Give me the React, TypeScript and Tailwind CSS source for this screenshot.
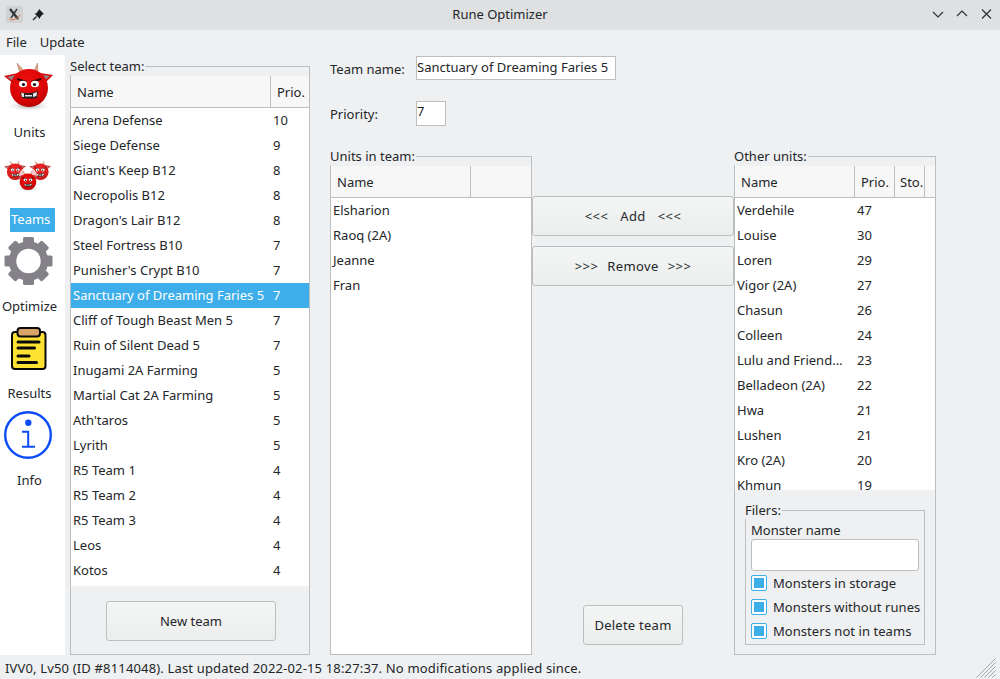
import type { ReactNode } from 'react'

const teams = [
  ['Arena Defense', '10'],
  ['Siege Defense', '9'],
  ["Giant's Keep B12", '8'],
  ['Necropolis B12', '8'],
  ["Dragon's Lair B12", '8'],
  ['Steel Fortress B10', '7'],
  ["Punisher's Crypt B10", '7'],
  ['Sanctuary of Dreaming Faries 5', '7'],
  ['Cliff of Tough Beast Men 5', '7'],
  ['Ruin of Silent Dead 5', '7'],
  ['Inugami 2A Farming', '5'],
  ['Martial Cat 2A Farming', '5'],
  ["Ath'taros", '5'],
  ['Lyrith', '5'],
  ['R5 Team 1', '4'],
  ['R5 Team 2', '4'],
  ['R5 Team 3', '4'],
  ['Leos', '4'],
  ['Kotos', '4'],
]

const teamUnits = ['Elsharion', 'Raoq (2A)', 'Jeanne', 'Fran']

const otherUnits = [
  ['Verdehile', '47'],
  ['Louise', '30'],
  ['Loren', '29'],
  ['Vigor (2A)', '27'],
  ['Chasun', '26'],
  ['Colleen', '24'],
  ['Lulu and Friend…', '23'],
  ['Belladeon (2A)', '22'],
  ['Hwa', '21'],
  ['Lushen', '21'],
  ['Kro (2A)', '20'],
  ['Khmun', '19'],
]

function DemonFace() {
  return (
    <g>
      <path d="M21 18 L17 4 L26 14Z" fill="#d9a084" stroke="#a8765c" strokeWidth="0.5" />
      <path d="M33 14 L37.5 4 L38 18Z" fill="#d9a084" stroke="#a8765c" strokeWidth="0.5" />
      <path d="M14 25 L4 17 L18 14Z" fill="#d80404" />
      <path d="M13 22 L7 18 L15 16Z" fill="#8a8a8a" />
      <path d="M44 25 L53 16 L40 14Z" fill="#d80404" />
      <path d="M45 21 L50 17 L43 16Z" fill="#8a8a8a" />
      <circle cx="29" cy="29" r="19" fill="url(#head)" />
      <path d="M17 19 L27 22 L26 24 L17 21Z" fill="#300" />
      <path d="M41 19 L31 22 L32 24 L41 21Z" fill="#300" />
      <ellipse cx="23" cy="25" rx="4" ry="3.2" fill="#fff" />
      <ellipse cx="35" cy="25" rx="4" ry="3.2" fill="#fff" />
      <circle cx="23.5" cy="25.5" r="1.6" fill="#111" />
      <circle cx="34.5" cy="25.5" r="1.6" fill="#111" />
      <path d="M20 33 Q29 36 38 32 L37 39 Q29 40.5 22 39Z" fill="#222" />
      <path d="M21 33.5 L24 34.5 L24 38 L22 38Z M33 34.5 L37 33 L36.5 37 L33 38Z M25 36 H32 V37.5 H25Z" fill="#e8e8e8" />
    </g>
  )
}

function Demon() {
  return (
    <svg width="60" height="60" viewBox="0 -2 60 60">
      <defs>
        <radialGradient id="head" cx="0.45" cy="0.35" r="0.7">
          <stop offset="0" stopColor="#f01010" />
          <stop offset="0.7" stopColor="#d80404" />
          <stop offset="1" stopColor="#b00000" />
        </radialGradient>
        <radialGradient id="shade">
          <stop offset="0" stopColor="#9a9a9a" />
          <stop offset="1" stopColor="#ffffff" stopOpacity="0" />
        </radialGradient>
      </defs>
      <ellipse cx="29" cy="47" rx="24" ry="5.5" fill="url(#shade)" />
      <DemonFace />
    </svg>
  )
}

function DemonTrio() {
  return (
    <svg width="60" height="60" viewBox="0 0 60 60">
      <ellipse cx="28" cy="45" rx="13" ry="2.5" fill="url(#shade)" />
      <g transform="translate(2.5 15) scale(0.44)" opacity="0.9">
        <DemonFace />
      </g>
      <g transform="translate(27.5 15) scale(0.44)" opacity="0.9">
        <DemonFace />
      </g>
      <circle cx="28" cy="32" r="9" fill="#fff" opacity="0.75" />
      <g transform="translate(15.2 25) scale(0.44)">
        <DemonFace />
      </g>
    </svg>
  )
}

function Gear() {
  const teeth = [0, 45, 90, 135, 180, 225, 270, 315]
  return (
    <svg width="60" height="60" viewBox="0 0 60 60">
      {teeth.map((a) => (
        <rect key={a} x="23" y="6" width="11" height="9" rx="1.5" fill="#848288" transform={`rotate(${a} 28.5 30)`} />
      ))}
      <circle cx="28.5" cy="30" r="16" fill="none" stroke="#848288" strokeWidth="7.5" />
    </svg>
  )
}

function Clipboard() {
  return (
    <svg width="60" height="60" viewBox="0 0 60 60">
      <rect x="12" y="14" width="33.5" height="37" rx="3" fill="#fde232" stroke="#0a0a0a" strokeWidth="2" />
      <rect x="17.5" y="10" width="22.5" height="8.5" rx="3" fill="#d9a468" stroke="#0a0a0a" strokeWidth="2" />
      <path d="M18 24 H39 M18 30 H34.5 M18 38 H29 M18 44.6 H36.5" stroke="#0a0a0a" strokeWidth="3" strokeLinecap="round" />
    </svg>
  )
}

function InfoIcon() {
  return (
    <svg width="60" height="60" viewBox="0 0 60 60">
      <circle cx="28" cy="30" r="22.8" fill="none" stroke="#0b4cf6" strokeWidth="2.4" />
      <circle cx="28.3" cy="17.8" r="3.2" fill="#0b4cf6" />
      <path d="M22 26.8 H28.2 V41.5 M22 41.8 H35" fill="none" stroke="#0b4cf6" strokeWidth="2" />
    </svg>
  )
}

function SideItem({ icon, label, active }: { icon: ReactNode; label: string; active?: boolean }) {
  return (
    <div className="flex h-[87px] w-[59px] flex-col items-center">
      <div className="flex h-[60px] w-[60px] shrink-0 items-center justify-center">{icon}</div>
      <div className={active ? 'mt-[4px] ml-[10px] flex h-[24px] w-[45px] shrink-0 items-center self-start bg-[#3daee9] pl-[1px] text-white' : 'mt-[4px] flex h-[24px] shrink-0 items-center'}>
        {label}
      </div>
    </div>
  )
}

function GroupBox({ title, className, children }: { title: string; className: string; children: ReactNode }) {
  return (
    <div className={`relative flex flex-col border border-[#bcbebf] ${className}`}>
      <span className="absolute -top-[9px] -left-[1px] bg-[#eff0f1] pr-[1px] leading-[17px]">{title}</span>
      {children}
    </div>
  )
}

function HeaderCell({ children, className }: { children?: ReactNode; className: string }) {
  return (
    <div className={`flex h-full items-center border-r border-[#bcbebf] pt-[2px] ${className}`}>{children}</div>
  )
}

function Row({ name, prio, nameWidth, selected }: { name: string; prio?: string; nameWidth: string; selected?: boolean }) {
  return (
    <div className={`flex h-[25px] shrink-0 items-center ${selected ? 'bg-[#3daee9] text-white' : ''}`}>
      <span className={`${nameWidth} shrink-0 whitespace-nowrap pl-[2px]`}>{name}</span>
      <span className="pl-[2px]">{prio}</span>
    </div>
  )
}

function Button({ children, className }: { children: ReactNode; className: string }) {
  return (
    <div className={`flex shrink-0 items-center justify-center rounded-[3px] border border-[#bcbebf] bg-gradient-to-b from-[#f4f5f5] to-[#eceded] pt-[1px] ${className}`}>
      {children}
    </div>
  )
}

function Filter({ label }: { label: string }) {
  return (
    <div className="flex h-[24px] shrink-0 items-center gap-[6px]">
      <div className="flex h-[16px] w-[16px] shrink-0 items-center justify-center rounded-[2px] border border-[#3daee9] bg-white">
        <div className="h-[10px] w-[10px] bg-[#3daee9]" />
      </div>
      <span className="whitespace-nowrap pt-[2px] tracking-[0.05px]">{label}</span>
    </div>
  )
}

export default function App() {
  return (
    <div className="flex h-[679px] w-[1000px] flex-col overflow-hidden bg-[#eff0f1] font-['Noto_Sans',sans-serif] text-[13px] text-[#232629]">
      <div className="relative flex h-[30px] shrink-0 items-center justify-center bg-[#dee0e2]">
        <div className="absolute top-[6px] left-[6px] flex h-[17px] w-[17px] items-center justify-center rounded-[2px] bg-[#cfd1d3]">
          <svg width="15" height="15" viewBox="0 0 15 15">
            <path d="M3 2 L11 12" stroke="#33363a" strokeWidth="2.4" />
            <path d="M10 2 L4 11" stroke="#33363a" strokeWidth="1.4" />
            <path d="M2 12 Q7 15 13 8" stroke="#d87a3a" strokeWidth="1" fill="none" />
          </svg>
        </div>
        <svg className="absolute top-[8px] left-[32px]" width="13" height="13" viewBox="0 0 13 13">
          <path d="M7 1 L12 6 L10.5 6.5 L8 9.5 L8 11 L2.5 5.5 L4 5.5 L6.5 2.5Z" fill="#1b1c1e" />
          <path d="M4.5 8.5 L1 12" stroke="#1b1c1e" strokeWidth="1.2" />
        </svg>
        <span>Rune Optimizer</span>
        <svg className="absolute top-[9px] left-[932px]" width="60" height="12" viewBox="0 0 60 12" fill="none" stroke="#2b2d30" strokeWidth="1.1">
          <path d="M1 3 L6 8 L11 3" />
          <path d="M25 7 L30 2 L35 7" />
          <path d="M50 0.5 L59 9.5 M59 0.5 L50 9.5" />
        </svg>
      </div>

      <div className="flex h-[25px] shrink-0 items-center gap-[13px] pt-[1px] pl-[6px]">
        <span>File</span>
        <span>Update</span>
      </div>

      <div className="flex h-[600px] shrink-0">
        <div className="flex w-[65px] shrink-0 flex-col bg-white pt-[2px]">
          <SideItem icon={<Demon />} label="Units" />
          <SideItem icon={<DemonTrio />} label="Teams" active />
          <SideItem icon={<Gear />} label="Optimize" />
          <SideItem icon={<Clipboard />} label="Results" />
          <SideItem icon={<InfoIcon />} label="Info" />
        </div>

        <GroupBox title="Select team:" className="mt-[11px] ml-[5px] h-[589px] w-[240px] shrink-0">
          <div className="mt-[9px] flex h-[32px] shrink-0 items-center border-b border-[#bcbebf] bg-[#f7f7f7]">
            <HeaderCell className="w-[200px] pl-[6px]">Name</HeaderCell>
            <span className="pt-[2px] pl-[6px]">Prio.</span>
          </div>
          <div className="flex h-[478px] shrink-0 flex-col overflow-hidden bg-white">
            {teams.map(([name, prio]) => (
              <Row key={name} name={name} prio={prio} nameWidth="w-[200px]" selected={name.startsWith('Sanctuary')} />
            ))}
          </div>
          <Button className="mt-[15px] ml-[35px] h-[40px] w-[170px]">New team</Button>
        </GroupBox>

        <div className="ml-[20px] flex flex-1 flex-col">
          <div className="mt-[1px] flex h-[24px] items-center">
            <span className="w-[86px] pt-[3px]">Team name:</span>
            <div className="flex h-[24px] w-[200px] items-center border border-[#bcbebf] bg-white pb-[1px]">Sanctuary of Dreaming Faries 5</div>
          </div>
          <div className="mt-[21px] flex h-[25px] items-center">
            <span className="w-[86px] pt-[2px]">Priority:</span>
            <div className="flex h-[25px] w-[30px] items-center border border-[#bcbebf] bg-white pb-[3px]">7</div>
          </div>
          <div className="mt-[30px] flex h-[499px]">
            <GroupBox title="Units in team:" className="h-[499px] w-[202px]">
              <div className="mt-[9px] flex h-[32px] shrink-0 items-center border-b border-[#bcbebf] bg-[#f7f7f7]">
                <HeaderCell className="w-[140px] pl-[6px]">Name</HeaderCell>
              </div>
              <div className="flex flex-1 flex-col bg-white">
                {teamUnits.map((name) => (
                  <Row key={name} name={name} nameWidth="w-[140px]" />
                ))}
              </div>
            </GroupBox>

            <div className="flex w-[202px] flex-col items-center">
              <Button className="mt-[40px] h-[40px] w-[202px] gap-[12px] tracking-[0.4px] whitespace-pre">
                <span>{'<<<'}</span>
                <span>Add</span>
                <span>{'<<<'}</span>
              </Button>
              <Button className="mt-[10px] h-[40px] w-[202px] gap-[9px] tracking-[0.4px] whitespace-pre">
                <span>{'>>>'}</span>
                <span>Remove</span>
                <span>{'>>>'}</span>
              </Button>
              <Button className="mt-auto mb-[10px] h-[40px] w-[100px] tracking-[0.25px]">Delete team</Button>
            </div>

            <GroupBox title="Other units:" className="h-[499px] w-[202px]">
              <div className="mt-[9px] flex h-[32px] shrink-0 items-center border-b border-[#bcbebf] bg-[#f7f7f7]">
                <HeaderCell className="w-[120px] pl-[6px]">Name</HeaderCell>
                <HeaderCell className="w-[40px] pl-[6px]">Prio.</HeaderCell>
                <HeaderCell className="w-[30px] pl-[5px]">Sto.</HeaderCell>
              </div>
              <div className="flex h-[292px] shrink-0 flex-col overflow-hidden bg-white">
                {otherUnits.map(([name, prio]) => (
                  <Row key={name} name={name} prio={prio} nameWidth="w-[120px]" />
                ))}
              </div>
              <GroupBox title="Filers:" className="mt-[20px] ml-[10px] h-[135px] w-[180px] px-[5px]">
                <div className="mt-[10px] shrink-0 leading-[18px]">Monster name</div>
                <div className="h-[32px] w-[168px] shrink-0 rounded-[3px] border border-[#bcbebf] bg-white" />
                <div className="flex flex-col">
                  <Filter label="Monsters in storage" />
                  <Filter label="Monsters without runes" />
                  <Filter label="Monsters not in teams" />
                </div>
              </GroupBox>
            </GroupBox>
          </div>
        </div>
      </div>

      <div className="relative flex h-[24px] shrink-0 items-center pt-[4px] pl-[5px]">
        <span className="tracking-[0.16px]">IVV0, Lv50 (ID #8114048). Last updated 2022-02-15 18:27:37. No modifications applied since.</span>
        <svg className="absolute top-[3px] right-[4px]" width="20" height="20" viewBox="0 0 20 20" stroke="#a4a6a8" strokeWidth="1">
          <path d="M0.5 19.5 L19.5 0.5 M4.5 19.5 L19.5 4.5 M8.5 19.5 L19.5 8.5 M12.5 19.5 L19.5 12.5 M16.5 19.5 L19.5 16.5" />
        </svg>
      </div>
    </div>
  )
}
